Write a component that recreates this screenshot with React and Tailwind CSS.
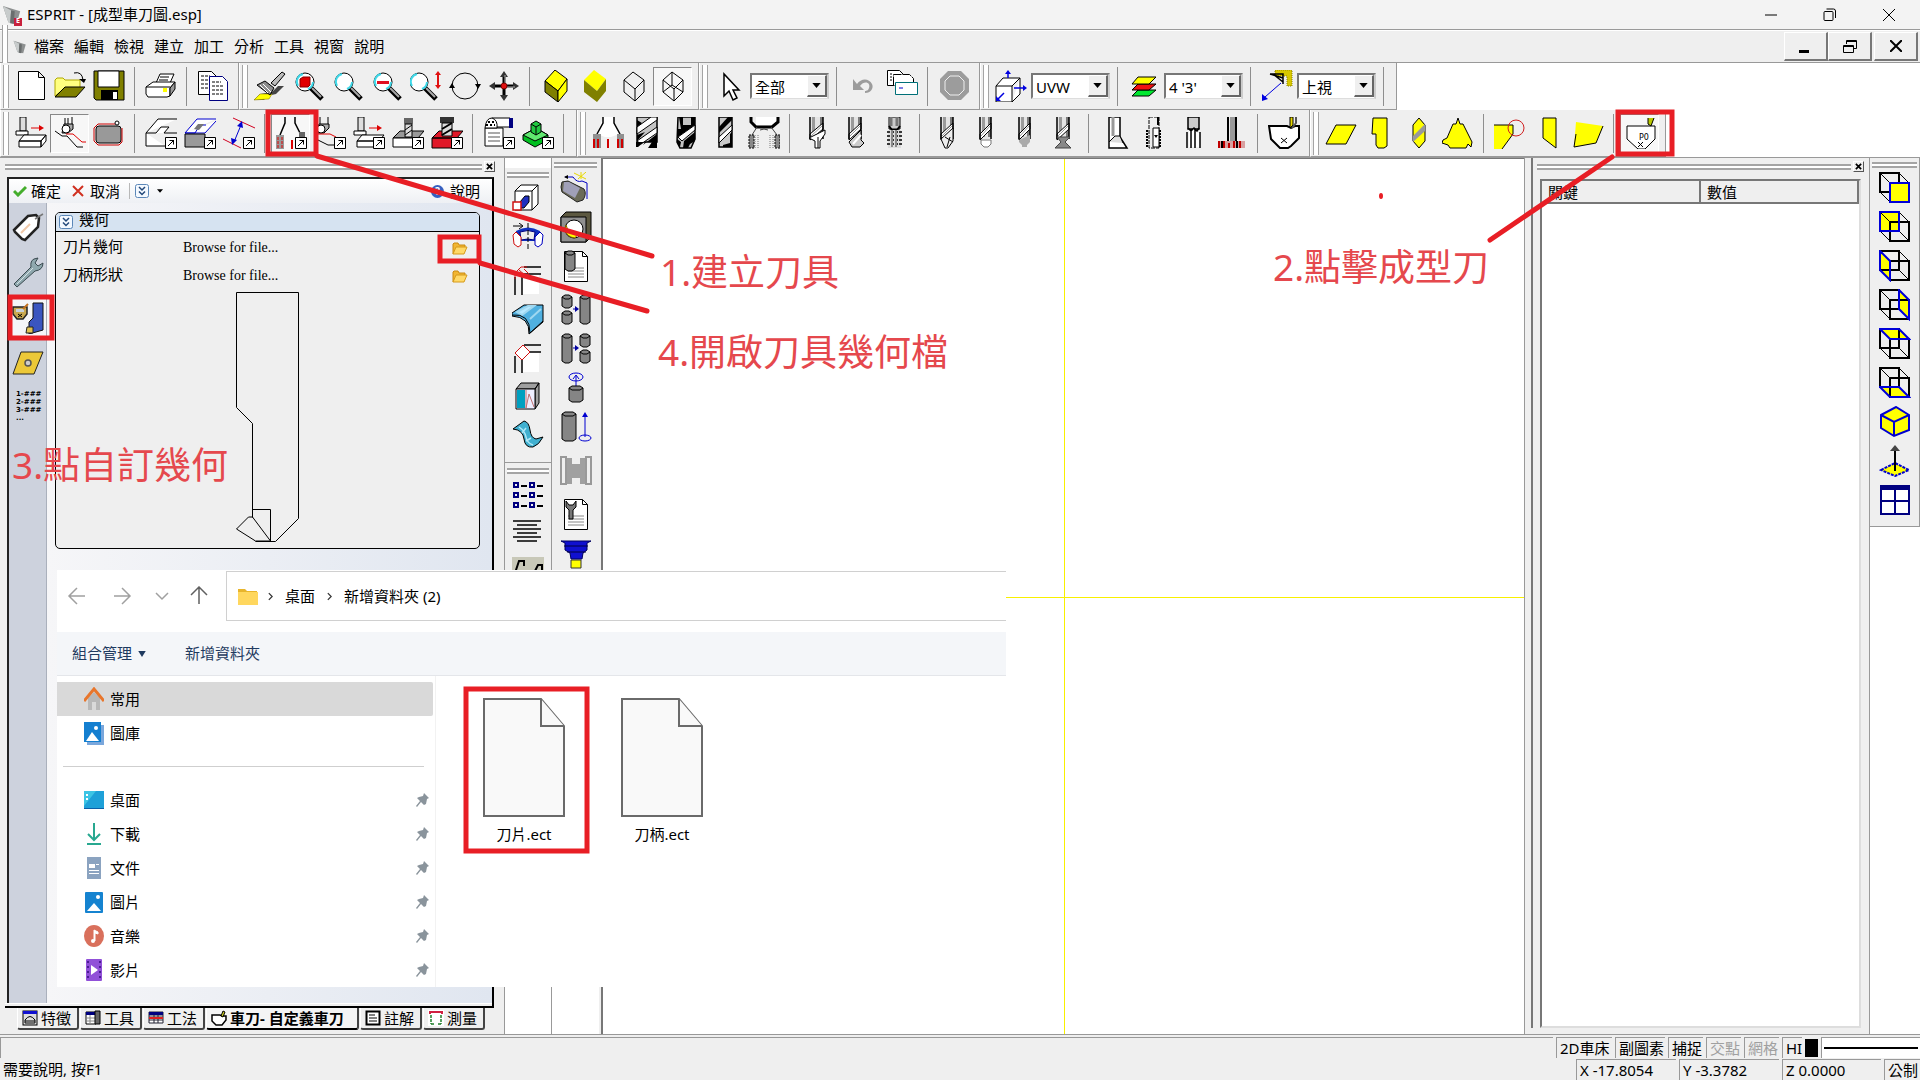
import { useState } from 'react';
import clsx from 'clsx';

const Badge = () => (
  <>
    <path d="M20.5 20.5h11v11h-11z" fill="#fff" stroke="#000" />
    <path d="M23 29l6-6M24.500 23.500h4v4" fill="none" stroke="#000" />
  </>
);

const Lens = ({ children }) => (
  <>
    <path d="M18 18l11 11" stroke="#000" strokeWidth="5" />
    <path d="M19 18l9 9" stroke="#a8a8a8" strokeWidth="2" />
    <circle cx="12" cy="12" r="9" fill="#fff" stroke="#000" />
    <path d="M5 16a8 8 0 0 1 5-12M15 19a8 8 0 0 0 5-7" fill="none" stroke="#3fd8e8" strokeWidth="2" />
    {children}
  </>
);

// shaded round shank with helical flutes, ends with the given tip
const Drill = ({ x = 9, w = 14, children }) => (
  <>
    <rect x={x} y="0" width={w} height="22" fill="#e4e4e4" />
    <rect x={x + 2} y="0" width="3" height="20" fill="#9a9a9a" />
    <rect x={x + w - 3} y="0" width="3" height="20" fill="#7a7a7a" />
    <path d={`M${x} 17l${w} -11v6l-${w} 11z`} fill="#fff" stroke="#000" />
    <path d={`M${x + 1} 19l${w - 2} -10`} stroke="#999" />
    <path d={`M${x} 0v22M${x + w} 0v22`} stroke="#000" strokeWidth="1.500" />
    {children}
  </>
);

const Cylinder = ({ x, y, w, h }) => (
  <>
    <path d={`M${x} ${y + 2}l3 -2h${w - 6}l3 2v${h - 4}l-3 2h-${w - 6}l-3 -2z`} fill="#858585" stroke="#000" />
    <path d={`M${x} ${y + 2}l3 2h${w - 6}l3 -2`} fill="none" stroke="#000" />
  </>
);

const faces = {
  front: '11,11 30,11 30,30 11,30',
  back: '1,1 20,1 20,20 1,20',
  left: '1,1 11,11 11,30 1,20',
  right: '20,1 30,11 30,30 20,20',
  top: '1,1 20,1 30,11 11,11',
  bottom: '1,20 20,20 30,30 11,30',
};

const ViewCube = ({ face }) => (
  <g strokeWidth="2" fill="none">
    {face !== 'front' && <polygon points={faces[face]} fill="#ff0" />}
    <path d="M1 1h19v19H1zM11 11h19v19H11z" stroke="#000" />
    <path d="M1 1l10 10M20 1l10 10M20 20l10 10M1 20l10 10" stroke="#000" strokeWidth="1" />
    <polygon points={faces[face]} stroke="#0000d8" fill={face === 'front' ? '#ff0' : 'none'} />
  </g>
);

const Sheet = () => (
  <>
    <path d="M4.500 1.500h18l5 5v25h-23z" fill="#fff" stroke="#000" />
    <path d="M22.500 1.500v5h5" fill="none" stroke="#000" />
    <path d="M8 18h16M8 21h16M8 24h16M8 27h16" stroke="#888" />
  </>
);

const icons = {
  newFile: <path d="M3.500 1.500h20l6 6v22h-26zM23.500 1.500v6h6" fill="#fff" stroke="#000" />,
  open: (
    <>
      <path d="M1 26V10l2-2h6l2 2h15v8H11z" fill="#ffff80" stroke="#b0a800" />
      <path d="M1 27l10-10h20L22 27z" fill="#808000" stroke="#000" />
      <path d="M20 3q8-2 9 7" fill="none" stroke="#000" />
      <path d="M25 9h7l-2 4z" />
    </>
  ),
  save: (
    <>
      <path d="M1 1h30v29H3l-2-2z" fill="#808000" stroke="#000" />
      <path d="M5 1h21v16H5z" fill="#fff" stroke="#000" />
      <path d="M8 20h17v10H8z" />
      <path d="M20 22h4v7h-4z" fill="#fff" />
    </>
  ),
  print: (
    <>
      <path d="M11 13l4-9h14l-4 9z" fill="#fff" stroke="#000" />
      <path d="M15 7h9M14 10h9" stroke="#000" />
      <path d="M1 17l7-5h22l-5 6v8l-3 1H3l-2-3z" fill="#fff" stroke="#000" />
      <path d="M25 18l5-6v7l-5 7z" fill="#999" stroke="#000" />
      <path d="M1 17h24" stroke="#000" />
      <path d="M18 18h4v4h-4z" fill="#ff0" />
    </>
  ),
  copy: (
    <>
      <path d="M1.500 1.500h13l5 5v18h-18z" fill="#fff" stroke="#000" />
      <path d="M4 6h9M4 10h12M4 14h12M4 18h12" stroke="#000" strokeDasharray="3 1" />
      <path d="M12.500 6.500h13l5 5v19h-18z" fill="#fff" stroke="#000080" />
      <path d="M15 12h9M15 16h12M15 20h12M15 24h12" stroke="#000" strokeDasharray="3 1" />
    </>
  ),
  brush: (
    <>
      <path d="M0 30l6-6 12-2 6-6h6l-8 8-9 2-3 4z" fill="#444" />
      <path d="M0 30l6-6h12l-3 5z" fill="#ff0" stroke="#807000" strokeWidth="0.500" />
      <path d="M3 15l8-4 9 7-4 7z" fill="#8c8c8c" stroke="#000" />
      <path d="M6 15l8 8M9 14l8 8" stroke="#fff" />
      <path d="M17 13L28 2l3 2-10 12z" fill="#bbb" stroke="#000" />
    </>
  ),
  zoomBox: <Lens><path d="M7 9l3-2h7v8l-2 2H7z" fill="#e00000" stroke="#800" /></Lens>,
  zoomPrev: <Lens />,
  zoomOut: <Lens><path d="M6 11h12v3H6z" fill="#e01020" /></Lens>,
  zoomDyn: (
    <>
      <g transform="translate(-3 0)"><Lens /></g>
      <path d="M28 3v14" stroke="#e01010" strokeWidth="2" />
      <path d="M25 5l3-4 3 4zM25 15l3 4 3-4z" fill="#e01010" />
    </>
  ),
  rotate: (
    <>
      <circle cx="16" cy="16" r="13" fill="none" stroke="#000" />
      <path d="M0 18h6l-3-5zM26 14h6l-3 5z" />
    </>
  ),
  pan: (
    <>
      <path d="M16 4v24M4 16h24" stroke="#000" strokeWidth="3" />
      <path d="M12 7l4-6 4 6zM12 25l4 6 4-6zM7 12l-6 4 6 4zM25 12l6 4-6 4z" fill="#333" />
      <path d="M17 5v8M19 17h8" stroke="#aaa" />
      <circle cx="16" cy="16" r="3" fill="#e01010" stroke="#800000" />
    </>
  ),
  cubeYellow: (
    <>
      <path d="M5 11l10-11 12 9-9 12z" fill="#ff0" stroke="#000" />
      <path d="M5 11l13 10v11L5 22z" fill="#808000" stroke="#000" />
      <path d="M18 21l9-12v12L18 32z" fill="#ff0" stroke="#000" />
    </>
  ),
  cubeShade: (
    <>
      <path d="M5 10l10-10 12 9-9 12z" fill="#ff0" />
      <path d="M5 10l13 11 9-12v12L18 32 5 22z" fill="#808000" />
    </>
  ),
  cubeLine: <path d="M6 10l9-8 11 8v12l-9 9-11-9zM6 10l11 9 9-9M17 19v12" fill="none" stroke="#000" />,
  cubeWire: <path d="M6 10l9-8 11 8v12l-9 9-11-9zM15 2v13L6 22M15 15l11 7M6 10l11 9 9-9M17 19v12" fill="none" stroke="#000" />,
  cursor: <path d="M10 4v22l5-5 4 9 4-2-4-8h6z" fill="#fff" stroke="#000" strokeWidth="1.500" />,
  undo: <path d="M6 9v11h11l-4-4c4-6 11-4 9 2-1 3-3 3-4 3v2c6 0 9-5 7-9-3-6-11-6-15 0z" fill="#9c9c9c" />,
  pages: (
    <>
      <path d="M1.500 0.500h12l4 4v11h-16z" fill="#fff" stroke="#000" />
      <path d="M4 4h2M4 7h2M4 10h2" stroke="#000" />
      <path d="M7.500 15.500v-11h16l4 4v8z" fill="#fff" stroke="#000" strokeDasharray="9 1" />
      <path d="M9.500 12.500h22v12h-22z" fill="#fff" stroke="#007078" />
      <path d="M13 18h4" stroke="#00c" />
    </>
  ),
  stop: (
    <>
      <path d="M10 1h13l8 8v13l-8 8H10l-8-8V9z" fill="#9c9c9c" />
      <path d="M12 6h9l5 5v9l-5 5h-9l-5-5v-9z" fill="none" stroke="#eee" />
    </>
  ),
  uvw: (
    <>
      <path d="M1 16h16v16H1zM1 16l7-8h17l-8 8M17 32l8-8V8" fill="#fff" stroke="#000" />
      <path d="M13 8V2M19 18h11M9 23l-7 7" stroke="#0000e0" strokeWidth="1.500" />
      <path d="M10 4h6l-3-4zM28 15v6l4-3zM1 26v5h5z" fill="#0000e0" />
    </>
  ),
  layers: (
    <>
      <path d="M4 26l6-6h18l-7 6z" fill="#00e830" stroke="#000" />
      <path d="M4 20l6-6h18l-7 6z" fill="#f01010" stroke="#000" />
      <path d="M4 14l6-7h18l-7 7z" fill="#ff0" stroke="#000" />
    </>
  ),
  viewDir: (
    <>
      <path d="M14 0h17v16h-5V6H14z" fill="#d8c800" stroke="#8a7f00" strokeDasharray="1 1" />
      <path d="M9 4h13v10M9 4l13 4M12 4l10 8" stroke="#000" fill="none" strokeWidth="1.500" />
      <path d="M20 13L4 27" stroke="#0000e0" />
      <path d="M1 31v-7l6 5z" fill="#0000e0" />
    </>
  ),

  machMill: (
    <>
      <path d="M5 0h6v14H5z" fill="#ddd" stroke="#000" />
      <path d="M1 14h12v4H1z" fill="#fff" stroke="#000" />
      <path d="M4 24l5-6h22l-5 6zM4 24h22v6H4zM26 24l5-6v6l-5 6z" fill="#fff" stroke="#000" />
      <path d="M16 11h9" stroke="#d00" />
      <path d="M24 8l5 3-5 3z" fill="#d00" />
    </>
  ),
  turning: (
    <>
      <path d="M11 1v8M18 0v9M14 1v6" stroke="#000" />
      <path d="M10 7h9v5l-5 4H8z" fill="#aaa" stroke="#000" />
      <circle cx="12" cy="12" r="4" fill="#fff" stroke="#000" />
      <path d="M1 14l7 5h5l10 11h6" fill="none" stroke="#000" />
      <path d="M12 17h7l9 8h4" fill="none" stroke="#d00" />
    </>
  ),
  pocket: (
    <>
      <rect x="3" y="9" width="25" height="17" rx="3" fill="#999" stroke="#000" />
      <path d="M22 7H5L1 11v13l4 4h21l3-3V11" fill="none" stroke="#c00" />
      <circle cx="24" cy="6" r="2" fill="#fff" stroke="#000" />
    </>
  ),
  stepWhite: (
    <>
      <path d="M1 16L13 2h19M1 16h10l5-6h8l-5 6h13M1 16v13h19" fill="#fff" stroke="#000" />
      <Badge />
    </>
  ),
  stepBlue: (
    <>
      <path d="M1 16L13 2h19M1 16h10l5-8h6M1 16h20L32 4" fill="#fff" stroke="#0000d0" />
      <path d="M10 12l4-5h6l-5 6z" fill="#777" />
      <path d="M1 17h20v13H1z" fill="#999" stroke="#000" />
      <Badge />
    </>
  ),
  measureIcon: (
    <>
      <path d="M10 1l22 10M0 22l18 9" stroke="#d00020" />
      <path d="M18 8l-7 17" stroke="#0000d0" />
      <path d="M19 4l-5 5 6 2zM9 28l-1-7 6 2z" fill="#0000d0" />
      <Badge />
    </>
  ),
  holder: (
    <>
      <path d="M10 0v6L5 18M20 0v6l6 12" fill="none" stroke="#000" strokeWidth="1.500" />
      <path d="M1 18h8v14H1z" fill="#999" />
      <path d="M3 20v12M7 20v12" stroke="#d00" strokeDasharray="3 1" />
      <path d="M17 23v9" stroke="#d00" strokeWidth="2" />
      <path d="M24 15h6v6h-6z" fill="#666" />
      <Badge />
    </>
  ),
  turnNew: (
    <>
      <path d="M6 0v8M14 0v8" stroke="#000" />
      <path d="M5 7h10v4l-5 5H2z" fill="#aaa" stroke="#000" />
      <circle cx="7" cy="12" r="4" fill="#fff" stroke="#000" />
      <path d="M2 17h14l6 3" fill="none" stroke="#d00" />
      <path d="M2 22l12 6h8" fill="none" stroke="#000" />
      <Badge />
    </>
  ),
  millNew: (
    <>
      <path d="M5 0h6v14H5z" fill="#ddd" stroke="#000" />
      <path d="M1 14h12v4H1z" fill="#fff" stroke="#000" />
      <path d="M4 24l5-6h22l-5 6zM4 24h22v6H4z" fill="#fff" stroke="#000" />
      <path d="M16 11h9" stroke="#d00" />
      <path d="M24 8l5 3-5 3z" fill="#d00" />
      <Badge />
    </>
  ),
  pocketNew: (
    <>
      <path d="M1 21l7-7h24l-6 7z" fill="#999" stroke="#000" />
      <path d="M1 21h22v9H1z" fill="#fff" stroke="#000" />
      <path d="M12 1h9v6h-9z" fill="#666" />
      <path d="M13 7h7v13h-7z" fill="#ddd" stroke="#000" />
      <path d="M13 13l7-5M13 18l7-5" stroke="#000" />
      <Badge />
    </>
  ),
  redNew: (
    <>
      <path d="M1 21l7-7h24l-6 7zM1 21h22v10H1z" fill="#e01828" stroke="#000" />
      <path d="M9 0h14v6H9z" fill="#333" />
      <path d="M11 6h10v13H11z" fill="#ddd" stroke="#000" />
      <path d="M11 12l10-6M11 18l10-6" stroke="#000" strokeWidth="2" />
      <Badge />
    </>
  ),
  sheetNew: (
    <>
      <path d="M9 1h18v9H9z" fill="#fff" stroke="#000" />
      <path d="M26 1h4v10h-4z" fill="#000080" />
      <path d="M2 11h18v18H2z" fill="#fff" stroke="#000" />
      <path d="M2 11q1-10 7-10 6 2 5 10z" fill="#fff" stroke="#000" />
      <path d="M5 5h8M3 8h9" stroke="#000" strokeWidth="2" strokeDasharray="2 2" />
      <path d="M5 16h12M5 20h12M5 24h12" stroke="#aaa" strokeWidth="2" />
      <Badge />
    </>
  ),
  greenNew: (
    <>
      <path d="M1 18l13-7 12 7v5L13 30 1 23z" fill="#00c020" stroke="#000" />
      <path d="M1 18l13-7 12 7-13 6z" fill="#60e870" stroke="#000" />
      <path d="M9 7l5-3 5 3v8l-5 3-5-3z" fill="#20c840" stroke="#000" />
      <path d="M9 7l5 3 5-3M14 10v8" fill="none" stroke="#000" />
      <Badge />
    </>
  ),

  collet: (
    <>
      <path d="M11 0h10l6 17-8 3h-6l-8-3z" fill="#fff" />
      <path d="M11 0v6L5 17M22 0v6l6 11" fill="none" stroke="#000" strokeWidth="1.500" />
      <path d="M1 17h8v14H1zM25 17h7v14h-7z" fill="#909090" />
      <path d="M2 22v9M6 22v9M26 22v9M30 22v9M16 22v9" stroke="#d00000" strokeWidth="2" />
    </>
  ),
  endMill: (
    <>
      <path d="M6 0h20v25H6z" fill="#c4c4c4" stroke="#000" strokeWidth="1.500" />
      <path d="M6 10L20 0h6v3L6 17zM6 24L26 10v6L10 27z" fill="#fff" stroke="#000" />
      <path d="M6 10V3l5 3zM6 24v-6l8-3zM12 28l14-11v8H14z" />
      <path d="M5 25h8l-6 5H5zM17 31l4-6h5v6z" />
    </>
  ),
  bullMill: (
    <>
      <path d="M8 0h17v22l-4 9H10l-3-6z" fill="#c4c4c4" stroke="#000" strokeWidth="1.500" />
      <path d="M9 0h4v8h8V0h4v8L8 20V12h3z" />
      <path d="M8 20L25 8v5L12 24z" fill="#fff" stroke="#000" />
      <path d="M13 31l1-7 11-9v9l-5 3-2 4zM7 22l4 3-1 5-3-4z" />
    </>
  ),
  ballMill: (
    <>
      <path d="M10 0h13v30H10z" fill="#c8c8c8" stroke="#000" strokeWidth="1.500" />
      <path d="M10 10L19 0h4v3L10 16z" />
      <path d="M10 20L23 8v5L10 26z" fill="#fff" stroke="#000" />
      <path d="M14 30h9V15l-2 2v9l-7 2z" />
    </>
  ),
  faceMill: (
    <>
      <path d="M8 0h20v8H8z" fill="#fff" />
      <path d="M3 0v5l5 5h16l6-5V0" fill="none" stroke="#000" strokeWidth="3" />
      <path d="M9 10L4 18M23 10l6 8M12 13q4-2 8 0" stroke="#444" fill="none" />
      <path d="M1 18h5v13H1zM27 18h5v13h-5z" fill="#888" stroke="#000" strokeDasharray="2 1" />
      <path d="M7 18v13M10 18v13M22 18v13M25 18v13" stroke="#777" strokeDasharray="1 1" />
    </>
  ),
  chamfer: (
    <Drill x={10} w={13}>
      <path d="M9 21l6 3v7h5v-7l5-7v-4L9 21z" fill="#fff" stroke="#000" />
      <path d="M18 20v11" stroke="#000" />
    </Drill>
  ),
  drill: (
    <Drill x={10} w={12}>
      <path d="M10 25l12-12v10l3 3-4 4h-8z" fill="#ccc" stroke="#000" />
      <path d="M14 27l8-9" stroke="#fff" strokeWidth="2" />
    </Drill>
  ),
  tap: (
    <>
      <path d="M11 0h11v12H11z" fill="#ccc" stroke="#000" />
      <path d="M13 0v9M19 0v9" stroke="#777" strokeWidth="3" />
      <path d="M11 9l3 4h5l3-4" fill="none" stroke="#000" strokeWidth="2" />
      <path d="M10 13h13v18H10z" fill="#ddd" />
      <path d="M9 15h15M9 19h15M9 23h15M9 27h15" stroke="#000" strokeWidth="1.500" strokeDasharray="3 1" />
      <path d="M14 13v17M18 13v17" stroke="#888" strokeWidth="2" />
    </>
  ),
  spot: (
    <Drill x={11} w={12}>
      <path d="M11 22l12-11v13l-5 7h-3z" fill="#eee" stroke="#000" />
      <path d="M15 20l8 5M17 30l3-10" stroke="#000" />
    </Drill>
  ),
  ballSmall: <Drill x={11} w={11}><path d="M12 23h10v4l-3 3h-4l-3-3z" fill="#fff" stroke="#777" /></Drill>,
  stepDrill: <Drill x={11} w={11}><path d="M11 23l11-5v7l-3 3v2h-5v-2l-3-3z" fill="#aaa" /></Drill>,
  countersink: <Drill x={10} w={12}><path d="M10 20h13l-5 5 6 6H8l6-6z" fill="#888" stroke="#444" /></Drill>,
  undercut: (
    <>
      <path d="M10 0h11v20l7 11H10z" fill="#fff" stroke="#000" strokeWidth="1.500" />
      <path d="M14 0v19" stroke="#999" strokeWidth="3" />
      <path d="M10 25l6-6h5l3 7" fill="#ddd" stroke="#000" />
    </>
  ),
  threadMill: (
    <>
      <path d="M11 0h10v31H11z" fill="#eee" stroke="#000" strokeDasharray="4 1" />
      <path d="M9 13v17M22 13v17" stroke="#000" strokeWidth="2" strokeDasharray="2 1" />
      <path d="M15 11h6v19h-6z" fill="#fff" stroke="#000" />
      <path d="M16 18h4l-2 3z" />
      <path d="M20 0v8" stroke="#000" strokeWidth="2" />
    </>
  ),
  reamer: (
    <>
      <path d="M11 0h11v12H11z" fill="#ccc" stroke="#000" strokeWidth="1.500" />
      <path d="M13 14v16M16 12v18M20 14v16M22 16v14" stroke="#fff" strokeWidth="2" />
      <path d="M10 15v16M14 12v19M18 12v19M23 15v16M11 11l3 3 3-3 3 3 2-3" stroke="#000" strokeWidth="1.500" fill="none" />
    </>
  ),
  slotMill: (
    <>
      <path d="M12 0v24M20 0v24" stroke="#000" strokeWidth="2" />
      <path d="M14 0h5v24h-5z" fill="#999" />
      <path d="M2 24h27v7H2z" fill="#d8a0a0" />
      <path d="M3 24v7M8 24v7M13 26v5M18 24v7M24 24v7" stroke="#c00000" strokeWidth="2" />
      <path d="M6 24v7M21 24v7" stroke="#000" strokeWidth="2" />
    </>
  ),
  customMill: (
    <>
      <path d="M1 9h18l4 2 4-2h4v12l-8 8-3 2h-8l-9-9z" fill="#fff" stroke="#000" strokeWidth="2" />
      <path d="M13 21l6 5M19 21l-6 5" stroke="#000" />
      <path d="M22 0h3v8l-3 3z" fill="#e8d800" stroke="#000" />
      <path d="M28 0v6l-4 5" fill="none" stroke="#555" strokeWidth="2" />
    </>
  ),
  rhomb: <path d="M1 27L11 8h20L21 27z" fill="#ff0" stroke="#000" />,
  groove: <path d="M9 1h14v28l-3 2h-6l-2-3V17H8z" fill="#ff0" stroke="#000" />,
  insertDia: (
    <>
      <path d="M10 8l6-7 6 7v16l-6 7-6-7z" fill="#ff0" stroke="#000" />
      <path d="M10 19l12-12v7L10 25z" fill="#999" />
    </>
  ),
  insertTri: <path d="M16 1l2 6h3l9 18-1 5-3-3-2 4H8l-2-3-6-2 1-3 4-2 6-14h3z" fill="#ff0" stroke="#000" />,
  insertCirc: (
    <>
      <path d="M0 8h19v9L8 32H0z" fill="#ff0" />
      <path d="M0 8h19v9L8 32" fill="none" stroke="#000" />
      <circle cx="22" cy="11" r="8" fill="none" stroke="#d02020" />
    </>
  ),
  insertCut: <path d="M10 1h13v30L10 21z" fill="#ff0" stroke="#000" />,
  insertTop: (
    <>
      <path d="M4 5l27 4-7 17-22 4z" fill="#ff0" />
      <path d="M31 9l-7 17-22 4 2-13" fill="none" stroke="#000" />
    </>
  ),
  customTurn: (
    <>
      <path d="M3 9h28v13l-10 10h-7L3 22z" fill="#fff" stroke="#000" />
      <text x="15" y="23" fontSize="8" fontFamily="DejaVu Sans" fill="#000">P0</text>
      <path d="M14 25l5 5M19 25l-5 5" stroke="#000" />
      <path d="M24 1v6l3 2 3-8" fill="#b8c800" stroke="#000" />
    </>
  ),

  extrude: (
    <>
      <path d="M3 7l6-6h17v19l-6 6H3z" fill="#fff" stroke="#000" />
      <path d="M3 7h17v19M20 7l6-6" fill="none" stroke="#000" />
      <path d="M8 18l5-6h4v6l-5 6H8z" fill="#2030c0" stroke="#000" />
      <path d="M1 18h8v8H1z" fill="#fff" stroke="#d01010" strokeWidth="1.500" />
    </>
  ),
  revolve: (
    <>
      <path d="M4 8q12-7 24 0v12l-6-2H9l-5 2z" fill="#1030c0" />
      <path d="M8 9q8-3 15 0l-1 8q-6-2-13 0z" fill="#eee" stroke="#000080" />
      <path d="M1 12l3-3 5 5v8l-3 2-4-3z" fill="#fff" stroke="#d01010" />
      <path d="M31 12l-3-3-5 5v8l3 2 4-3z" fill="#fff" stroke="#0000c0" />
      <path d="M16 0v28" stroke="#000" strokeDasharray="5 2" />
      <path d="M1 3h9M7 0l4 3-4 3" stroke="#000" fill="none" />
    </>
  ),
  fillet: (
    <>
      <path d="M10 10h17v20H10z" fill="#fff" />
      <path d="M3 31V13M12 3h17M10 31V10h19" fill="none" stroke="#000" strokeWidth="1.500" />
      <path d="M3 15V9l6-6h6M6 5l10 9M12 5l5 5" fill="none" stroke="#d01010" />
    </>
  ),
  surfaceBend: (
    <>
      <path d="M0 10L12 2h19v17L17 31q1-17-17-18z" fill="#50b0e0" stroke="#000" />
      <path d="M5 9L16 3h6L10 12zM18 16L29 6" fill="#b8e8ff" stroke="#a0d8f0" strokeWidth="2" />
      <path d="M0 12q18-2 18 18L31 18" fill="none" stroke="#000" />
    </>
  ),
  chamferEdge: (
    <>
      <path d="M10 10h17v20H10z" fill="#fff" />
      <path d="M3 31V14M12 3h17M10 31V18M17 10h12" fill="none" stroke="#000" strokeWidth="1.500" />
      <path d="M3 11l8-8 7 7-8 8z" fill="#fff" stroke="#d01010" />
    </>
  ),
  bookSolid: (
    <>
      <path d="M4 8l5-6h18l-4 6zM23 8l4-6v20l-4 6z" fill="#a0a0a0" stroke="#000" />
      <path d="M4 8h19v20H4z" fill="#eef" stroke="#000" />
      <path d="M5 9h8v18H5z" fill="#00a0c0" />
      <path d="M14 9v18l3-14 5 13" fill="none" stroke="#c07070" />
    </>
  ),
  surfaceWave: (
    <>
      <path d="M1 9l11-8q5 1 6 9t6 9l7-2q-4 8-10 10-8 1-9-8T1 9z" fill="#40b0d0" stroke="#000" />
      <path d="M7 7q6 4 7 10t7 8M14 8l-4 5M19 18l-5 3" stroke="#b0e8f8" fill="none" strokeWidth="1.500" />
    </>
  ),
  patternList: (
    <>
      <path d="M2 4h4v4H2zM18 4h4v4h-4zM2 14h4v4H2zM18 14h4v4h-4zM2 24h4v4H2zM18 24h4v4h-4z" fill="none" stroke="#000080" strokeWidth="2" />
      <path d="M9 7h6M25 7h6M9 17h6M25 17h6M9 27h6M25 27h6" stroke="#000" strokeWidth="2" />
    </>
  ),
  textLines: <path d="M1 6h28M5 10h20M1 14h28M5 18h20M1 22h28M5 26h20" stroke="#000" strokeWidth="1.500" />,
  wireBox: (
    <>
      <path d="M0 6h32v22H0z" fill="#c8c8b8" />
      <path d="M3 22l4-12h5v5M22 22l4-8h4v8" fill="none" stroke="#000" strokeWidth="2" />
    </>
  ),

  barStock: (
    <>
      <path d="M2 10l6-1 16 8q3 5-1 11l-6 2L2 20q-2-5 0-10z" fill="#6a6a58" stroke="#222" />
      <path d="M4 10h5l11 6-5 10-12-7z" fill="#a0a0b8" />
      <path d="M5 5h8q4 6 9 4l5 2v16" fill="none" stroke="#0000c0" />
      <path d="M14 1l12 6M26 0l-8 7M21 0v7" stroke="#e8d800" />
      <path d="M4 5l4-2v4z" />
    </>
  ),
  boreBox: (
    <>
      <path d="M1 6l5-5h25v25l-5 5H1z" fill="#5c5840" stroke="#000" />
      <path d="M1 6h25v25H1z" fill="#909090" stroke="#000" />
      <circle cx="14" cy="18" r="9" fill="#fff" stroke="#000" />
      <path d="M6 14q2 9 12 9l-3 4q-9-1-10-9z" fill="#ff0" stroke="#806000" />
    </>
  ),
  stockSheet: <><Sheet /><Cylinder x={5} y={1} w={10} h={20} /></>,
  joinCyl: (
    <>
      <Cylinder x={2} y={1} w={10} h={13} />
      <Cylinder x={2} y={17} w={10} h={13} />
      <Cylinder x={20} y={1} w={10} h={29} />
      <path d="M13 15h3" stroke="#0000a0" /><path d="M15 12l4 3-4 3z" fill="#0000a0" />
    </>
  ),
  splitCyl: (
    <>
      <Cylinder x={2} y={1} w={10} h={29} />
      <Cylinder x={20} y={1} w={10} h={13} />
      <Cylinder x={20} y={17} w={10} h={13} />
      <path d="M13 15h3" stroke="#0000a0" /><path d="M15 12l4 3-4 3z" fill="#0000a0" />
    </>
  ),
  rotateCyl: (
    <>
      <ellipse cx="16" cy="5" rx="7" ry="4" fill="none" stroke="#0000d0" />
      <path d="M16 16V4M13 7l3-4 3 4" fill="none" stroke="#0000d0" />
      <Cylinder x={9} y={14} w={14} h={16} />
    </>
  ),
  moveCyl: (
    <>
      <Cylinder x={2} y={1} w={14} h={29} />
      <path d="M25 26V4" stroke="#0000d0" /><path d="M22 6l3-5 3 5z" fill="#0000d0" />
      <ellipse cx="25" cy="27" rx="6" ry="3" fill="none" stroke="#0000d0" />
    </>
  ),
  spoolGrey: (
    <>
      <path d="M1 2h5v27H1zM26 2h5v27h-5z" fill="#eee" stroke="#999" strokeWidth="2" />
      <path d="M7 3h5v6h8V3h5v26h-5v-6h-8v6H7z" fill="#a0a0a0" />
    </>
  ),
  wrenchSheet: (
    <>
      <Sheet />
      <path d="M6 3v6l3 3v9h4v-9l3-3V3l-3 4H9z" fill="#777" stroke="#000" />
    </>
  ),
  spindleBlue: (
    <>
      <path d="M1 4h30l-4 2v7l-4 3-1 6H11l-1-6-5-3V6z" fill="#1010d0" stroke="#000060" />
      <path d="M4 9h24M7 15h19" stroke="#000040" />
      <path d="M11 23h10v8H11z" fill="#ff0" stroke="#333" />
    </>
  ),

  isoView: (
    <>
      <path d="M2 9L17 1l13 8v15l-15 6-13-8z" fill="#ff0" stroke="#0000d0" strokeWidth="2" />
      <path d="M2 9l13 7 15-7M15 16v14" fill="none" stroke="#0000d0" strokeWidth="2" />
    </>
  ),
  normalView: (
    <>
      <path d="M2 25l14-7 14 7-14 6z" fill="#ff0" stroke="#0000d0" strokeDasharray="3 1" strokeWidth="2" />
      <path d="M16 26V2" stroke="#000" strokeWidth="2" />
      <path d="M11 6l5-6 5 6z" fill="#444" />
    </>
  ),
  fourView: (
    <>
      <path d="M2 2h28v28H2zM16 5v25M2 17h28" fill="#fff" stroke="#000080" strokeWidth="2" />
      <path d="M1 1h30v5H1z" fill="#000080" />
    </>
  ),
};

['front', 'back', 'left', 'right', 'top', 'bottom'].forEach((f) => {
  icons[`view-${f}`] = <ViewCube face={f} />;
});

function Icon({ name, className = 'size-8' }) {
  return (
    <svg viewBox="0 0 32 32" className={clsx(className, 'shrink-0')} fill="#000" aria-hidden="true">
      {icons[name]}
    </svg>
  );
}

function ToolButton({ name, pressed }) {
  return (
    <button
      aria-label={name}
      className={clsx(
        'flex h-[39px] w-[39px] shrink-0 items-center justify-center',
        pressed && 'border border-t-[#888] border-l-[#888] border-r-white border-b-white bg-[#f7f7f7]'
      )}
    >
      <Icon name={name} />
    </button>
  );
}

const Sep = () => <div className="mx-[6px] h-[39px] w-px shrink-0 bg-[#8e8e8e]" />;

function Grip({ wide }) {
  return wide ? (
    <div className="h-[6px] w-full border-y-2 border-t-[#a4a4a4] border-b-[#a4a4a4] bg-white" />
  ) : (
    <div className="mr-[2px] ml-[2px] h-[43px] w-[6px] shrink-0 border-x border-[#a4a4a4] bg-white" />
  );
}

function Band({ children }) {
  return (
    <div className="flex h-[47px] shrink-0 items-center border-r border-b border-l border-r-[#999] border-b-[#999] border-l-white bg-[#efefef] pr-[6px]">
      <Grip />
      {children}
    </div>
  );
}

function Combo({ label, value }) {
  return (
    <div className="relative mr-px ml-px h-[26px] w-[79px] shrink-0 border-2 border-[#777] border-r-[#ccc] border-b-[#ddd] bg-white">
      <select aria-label={label} defaultValue={value} className="h-full w-full appearance-none bg-white pl-[3px] text-[15px] leading-[20px] outline-none">
        <option>{value}</option>
      </select>
      <div className="pointer-events-none absolute inset-y-0 right-0 flex w-[20px] items-center justify-center border border-r-2 border-b-2 border-white border-r-[#666] border-b-[#666] bg-[#efefef]">
        <svg viewBox="0 0 10 6" className="h-[5px] w-[9px]"><path d="M0 0h10L5 6z" /></svg>
      </div>
    </div>
  );
}

// "|" puts a separator, "*" marks the pressed button
function Tools({ list }) {
  return list.split(' ').map((n, i) =>
    n === '|' ? <Sep key={i} /> : <ToolButton key={i} name={n.replace('*', '')} pressed={n.endsWith('*')} />
  );
}

const Cone = ({ className }) => (
  <svg viewBox="0 0 22 22" className={className} aria-hidden="true">
    <path d="M1 1l19 6-4 14-9-2z" fill="#8d9090" />
    <path d="M1 1l9 5-1 14-2-1z" fill="#c8cccc" />
    <path d="M10 6l4 1-1 14-4-1z" fill="#6a6e6e" />
  </svg>
);

function TitleBar() {
  return (
    <header className="flex h-[30px] shrink-0 items-center border-b border-[#999] bg-[#f3f3f3] pl-[2px]">
      <div className="relative">
        <Cone className="size-[20px]" />
        <span className="absolute right-0 -bottom-px flex h-[8px] w-[8px] items-center justify-center bg-[#c8203c] text-[7px] font-bold text-white">E</span>
      </div>
      <h1 className="ml-[5px] text-[15px]">ESPRIT - [成型車刀圖.esp]</h1>
      <div className="ml-auto flex items-center">
        <button aria-label="最小化" className="flex w-[58px] justify-center">
          <svg viewBox="0 0 12 12" className="size-3"><path d="M0 6h12" stroke="#000" /></svg>
        </button>
        <button aria-label="還原" className="flex w-[58px] justify-center">
          <svg viewBox="0 0 13 13" className="size-[13px]" fill="none" stroke="#000">
            <rect x="1" y="3.500" width="9" height="9" rx="1" /><path d="M3.500 1h7a2 2 0 0 1 2 2v7" />
          </svg>
        </button>
        <button aria-label="關閉" className="flex w-[62px] justify-center">
          <svg viewBox="0 0 12 12" className="size-3"><path d="M0 0l12 12M12 0L0 12" stroke="#000" /></svg>
        </button>
      </div>
    </header>
  );
}

const mdiBtn = 'flex h-[29px] w-[44px] items-center justify-center border border-white border-r-2 border-b-2 border-r-[#777] border-b-[#777]';

function MenuBar() {
  return (
    <nav className="flex h-[33px] shrink-0 items-center border-t border-b border-t-white border-b-[#999]">
      <Grip />
      <Cone className="ml-[3px] size-[14px]" />
      <div className="ml-[7px] flex gap-[10px] text-[15px]">
        {['檔案', '編輯', '檢視', '建立', '加工', '分析', '工具', '視窗', '說明'].map((m) => (
          <button key={m}>{m}</button>
        ))}
      </div>
      <div className="ml-auto flex pr-[2px]">
        <button aria-label="最小化文件" className={mdiBtn}><span className="mt-[11px] mr-[4px] h-[3px] w-[10px] bg-black" /></button>
        <button aria-label="還原文件" className={mdiBtn}>
          <svg viewBox="0 0 16 15" className="h-[15px] w-[16px]" fill="none" stroke="#000">
            <path d="M4.500 5V1.500h10v8H11M4 2.500h11" /><path d="M1.500 6.500h10v7h-10zM1 7.500h11" />
          </svg>
        </button>
        <button aria-label="關閉文件" className={clsx(mdiBtn, 'ml-[2px]')}>
          <svg viewBox="0 0 12 12" className="size-3"><path d="M0 0l12 12M12 0L0 12" stroke="#000" strokeWidth="2" /></svg>
        </button>
      </div>
    </nav>
  );
}

function Toolbars() {
  return (
    <div className="shrink-0 bg-white">
      <div className="flex">
        <Band><Tools list="newFile open save | print | copy" /></Band>
        <Band><Tools list="brush zoomBox zoomPrev zoomOut zoomDyn rotate pan | cubeYellow cubeShade cubeLine cubeWire*" /></Band>
        <Band>
          <Tools list="cursor" /><Combo label="選取" value="全部" />
          <Tools list="| undo pages | stop" />
        </Band>
        <Band>
          <Tools list="uvw" /><Combo label="座標" value="UVW" /><Sep />
          <Tools list="layers" /><Combo label="圖層" value="4 '3'" /><Sep />
          <Tools list="viewDir" /><Combo label="視圖" value="上視" /><Sep />
        </Band>
      </div>
      <div className="flex">
        <Band>
          <Tools list="machMill turning* pocket | stepWhite stepBlue measureIcon | holder* turnNew millNew pocketNew redNew | sheetNew greenNew |" />
        </Band>
        <Band>
          <Tools list="collet endMill bullMill ballMill faceMill | chamfer drill tap | spot ballSmall stepDrill countersink | undercut threadMill reamer slotMill | customMill" />
        </Band>
        <Band>
          <Tools list="rhomb groove insertDia insertTri | insertCirc insertCut insertTop | customTurn*" />
        </Band>
      </div>
    </div>
  );
}

const CloseX = () => (
  <button aria-label="關閉面板" className="flex size-[11px] shrink-0 items-center justify-center border border-white border-r-[#555] border-b-[#555] bg-[#efefef]">
    <svg viewBox="0 0 8 8" className="size-[7px]"><path d="M1 1l6 6M7 1L1 7" stroke="#000" strokeWidth="2" /></svg>
  </button>
);

const Chevrons = () => (
  <svg viewBox="0 0 14 14" className="size-[14px]" fill="none" aria-hidden="true">
    <rect x="0.500" y="0.500" width="13" height="13" rx="2" fill="#f4f9ff" stroke="#5b87b8" />
    <path d="M4 3l3 3 3-3M4 7.500l3 3 3-3" stroke="#22487a" strokeWidth="1.500" />
  </svg>
);

const FolderOpen = () => (
  <svg viewBox="0 0 16 13" className="h-[13px] w-[16px]" aria-hidden="true">
    <path d="M1 12V2l1-1h4l1 2h6v3" fill="#f2b632" stroke="#c98a10" />
    <path d="M1 12l3-7h11l-3 7z" fill="#ffd968" stroke="#d69a1a" />
  </svg>
);

const sideTabs = [
  <svg viewBox="0 0 32 32" className="size-8">
    <path d="M2 18L16 4l8-1 3 3-1 9-13 13-3-1-7-7z" fill="#fff" stroke="#222" strokeWidth="2.500" />
    <path d="M9 21l9-9" stroke="#f0c8a8" strokeWidth="2" />
    <path d="M23 7l8-5" stroke="#777" strokeWidth="1.500" />
  </svg>,
  <svg viewBox="0 0 32 32" className="size-8">
    <path d="M2 27l17-17q-1-6 3-8l4-1-3 5 3 3 5-3q0 7-8 8L5 30z" fill="#8fa8ae" stroke="#3a4a50" />
    <path d="M5 27l16-16" stroke="#d5e2e5" />
  </svg>,
  <svg viewBox="0 0 32 32" className="size-8">
    <path d="M21 1h10v27l-14 4V20l4-4z" fill="#3a55c0" stroke="#111" />
    <path d="M1 5h14v7l-4 5H5l-4-5z" fill="#c8a850" stroke="#222" strokeWidth="1.500" />
    <path d="M4 7h8v3H4z" fill="#c8d0d8" />
    <path d="M11 7l5-5" stroke="#c07020" strokeWidth="2" />
    <path d="M6 12l4 3M10 12l-4 3" stroke="#000" />
    <path d="M15 25h6v6h-7z" fill="#e0c050" stroke="#222" />
  </svg>,
  <svg viewBox="0 0 32 32" className="size-8">
    <path d="M9 5h22l-9 22H1z" fill="#ecc838" stroke="#222" />
    <circle cx="16" cy="16" r="3" fill="#ccc" stroke="#555" strokeWidth="1.500" />
  </svg>,
];

function TaskPanel() {
  const [tab, setTab] = useState(2);
  return (
    <section className="mr-[10px] ml-[7px] flex min-h-0 flex-1 flex-col border-t-2 border-r-2 border-l-2 border-t-[#222] border-r-black border-l-[#222]">
      <div className="flex h-[24px] shrink-0 items-center bg-linear-to-b from-white to-[#eef0f4] pr-[12px] pl-[4px] text-[15px] leading-[22px]">
        <svg viewBox="0 0 14 12" className="h-3 w-[14px]"><path d="M1 6l4 4 8-8" fill="none" stroke="#44ad2c" strokeWidth="3" /></svg>
        <button className="ml-[4px]">確定</button>
        <svg viewBox="0 0 12 12" className="ml-[11px] size-[12px]"><path d="M1 1l10 10M11 1L1 11" stroke="#d03020" strokeWidth="2" /></svg>
        <button className="ml-[6px]">取消</button>
        <span className="mr-[5px] ml-[9px] h-4 w-px bg-[#b8b8b8]" />
        <Chevrons />
        <svg viewBox="0 0 10 6" className="ml-[8px] h-[4px] w-[6px]"><path d="M0 0h10L5 6z" /></svg>
        <span className="ml-auto flex size-[13px] items-center justify-center rounded-full bg-[#3560c0] text-[10px] leading-none font-bold text-white">?</span>
        <button className="ml-[6px]">說明</button>
      </div>
      <div className="flex min-h-0 flex-1">
        <div className="flex w-[38px] shrink-0 flex-col border-r border-[#aab0bc] bg-[#cdd2dd] pt-[2px]">
          {sideTabs.map((icon, i) => (
            <button
              key={i}
              aria-label={`分頁 ${i + 1}`}
              onClick={() => setTab(i)}
              className={clsx('flex h-[45px] items-center justify-center', tab === i && 'bg-[#f4f5f8]')}
            >
              {icon}
            </button>
          ))}
          <button className="pt-[5px] pl-[7px] text-left font-['DejaVu_Sans'] text-[7px] leading-[8px] font-bold">
            1-###<br />2-###<br />3-###<br />...
          </button>
        </div>
        <div className="min-w-0 flex-1 bg-linear-to-r from-[#f6f6f8] to-[#e0e6f0] pt-[9px] pr-[12px] pl-[8px]">
          <div className="rounded-[5px] border border-black bg-[#efefef]">
            <h2 className="flex h-[19px] items-center rounded-t-[4px] border-b border-black bg-[#d6e3f1] pl-[3px] text-[15px]">
              <Chevrons /><span className="mb-[6px] ml-[6px]">幾何</span>
            </h2>
            {['刀片幾何', '刀柄形狀'].map((label) => (
              <div key={label} className="flex h-[28px] items-center pr-[11px] pl-[7px] text-[15px]">
                <span className="w-[120px]">{label}</span>
                <span className="pt-[3px] font-['Liberation_Serif'] text-[14px]">Browse for file...</span>
                <button aria-label={`開啟${label}`} className="ml-auto pt-[4px]"><FolderOpen /></button>
              </div>
            ))}
            <svg viewBox="0 0 422 260" className="h-[260px] w-[422px]" fill="none" stroke="#000">
              <path d="M180.500 4.500h62v226l-23 23h-20M180.500 4.500v115l16 16v94" />
              <path d="M196.500 221.500h18v32M196.500 229l18 24h-15l-19-12 12-12h4" />
            </svg>
          </div>
        </div>
      </div>
      <div className="-ml-[4px] h-[5px] shrink-0 border-t border-b-2 border-t-white border-b-black bg-[#efefef]" />
    </section>
  );
}

const dockTabs = [
  ['特徵', <><rect x="1" y="1" width="14" height="14" fill="#ddd" stroke="#000" /><path d="M1 1h14v3H1z" fill="#1010d0" /><path d="M3 10q5-7 10 0v3H3zM3 11h10" fill="none" stroke="#000" /></>],
  ['工具', <><path d="M1 2h10v12H1z" fill="#fff" stroke="#000" /><path d="M1 2h10v3H1z" fill="#000080" /><path d="M2 8h8M2 11h8M5 5v9" stroke="#888" /><path d="M10 1h5v13h-5z" fill="#666" stroke="#000" /></>],
  ['工法', <><path d="M1 2h14v11H1zM1 6h14M1 10h14M6 2v11M10 2v11" fill="#fff" stroke="#223" /><path d="M1 2h14v3H1z" fill="#000080" /><path d="M1 8h14" stroke="#e02020" strokeWidth="2" /></>],
  ['車刀- 自定義車刀', <><path d="M1 5h8l2 1h4v4l-4 5H5l-4-4z" fill="#fff" stroke="#000" strokeWidth="1.500" /><path d="M10 6l2-5 2 1-2 5z" fill="#c8c820" stroke="#000" /></>],
  ['註解', <><path d="M1.500 1.500h13v13h-13z" fill="#fff" stroke="#000" strokeWidth="2" /><path d="M4 5h6M4 8h8M4 11h8" stroke="#000" /></>],
  ['測量', <><path d="M0 0h16v16H0z" fill="#fff" /><path d="M3 2h10M2 1v3M14 1v3" stroke="#d02040" strokeWidth="2" /><path d="M3 5v9M13 5v9M3 14h3M10 14h3" stroke="#20802c" strokeDasharray="3 1" strokeWidth="1.500" /></>],
];

function DockTabs() {
  return (
    <div className="flex h-[26px] shrink-0 pl-[17px]">
      {dockTabs.map(([label, icon], i) => (
        <button
          key={label}
          className={clsx(
            'mr-px flex h-[22px] items-center gap-[3px] rounded-b-[3px] border-r-2 border-b-2 border-l border-l-white border-r-[#444] border-b-[#444] pr-[6px] pl-[4px] text-[15px] leading-[18px] whitespace-nowrap',
            i === 3 && 'min-w-[153px] border-b-black bg-[#f4f4f4] font-bold'
          )}
        >
          <svg viewBox="0 0 16 16" className="size-4 shrink-0">{icon}</svg>
          {label}
        </button>
      ))}
    </div>
  );
}

function LeftDock() {
  return (
    <aside className="flex w-[504px] shrink-0 flex-col">
      <div className="mb-[2px] flex h-[17px] shrink-0 items-center gap-[2px] pr-[9px] pl-[5px]">
        <Grip wide />
        <CloseX />
      </div>
      <TaskPanel />
      <DockTabs />
    </aside>
  );
}

const VButton = ({ name, tight }) => (
  <button aria-label={name} className={clsx('flex items-center justify-center', tight ? 'h-[36px]' : 'h-[39px]')}>
    <Icon name={name} />
  </button>
);

function VerticalBars() {
  return (
    <>
      <div className="flex w-[48px] shrink-0 flex-col border-r border-l border-[#999]">
        <div className="h-[10px] bg-white" />
        <div className="px-[2px] pt-[4px]"><Grip wide /></div>
        <div className="flex flex-col border-b border-[#999] pt-[2px] pb-[7px]">
          {['extrude', 'revolve'].map((n) => <VButton key={n} name={n} />)}
          <div className="h-[2px]" />
          {['fillet', 'surfaceBend', 'chamferEdge', 'bookSolid', 'surfaceWave'].map((n) => <VButton key={n} name={n} />)}
        </div>
        <div className="px-[2px] pt-[5px]"><Grip wide /></div>
        <div className="flex flex-col pt-[3px]">
          {['patternList', 'textLines', 'wireBox'].map((n) => <VButton key={n} name={n} tight />)}
        </div>
        <div className="flex-1 bg-white" />
      </div>
      <div className="flex w-[51px] shrink-0 flex-col border-r-2 border-[#777] pr-[2px]">
        <div className="px-[2px] pt-[4px]"><Grip wide /></div>
        {['barStock', 'boreBox', 'stockSheet'].map((n) => <VButton key={n} name={n} />)}
        <div className="h-[5px]" />
        {['joinCyl', 'splitCyl', 'rotateCyl', 'moveCyl'].map((n) => <VButton key={n} name={n} />)}
        <div className="h-[5px]" />
        <VButton name="spoolGrey" />
        <div className="h-[4px]" />
        {['wrenchSheet', 'spindleBlue'].map((n) => <VButton key={n} name={n} />)}
        <div className="flex-1 bg-white" />
      </div>
    </>
  );
}

function Canvas() {
  return (
    <div className="relative min-w-0 flex-1 border-t border-[#777] bg-white">
      <div className="absolute inset-y-0 left-1/2 w-px bg-[#f8f000]" />
      <div className="absolute top-1/2 right-0 left-0 h-px bg-[#f8f000]" />
    </div>
  );
}

function PropertyPanel() {
  return (
    <aside className="flex w-[346px] shrink-0 flex-col border-r border-l border-[#999] pb-[6px]">
      <div className="ml-[6px] flex flex-1 flex-col border-l-2 border-[#777] pr-[5px] pl-[4px]">
        <div className="mb-[4px] flex h-[17px] items-center gap-[2px]">
          <Grip wide />
          <CloseX />
        </div>
        <div className="mr-[3px] ml-[3px] flex-1 border-2 border-t-[#777] border-r-[#ddd] border-b-[#ddd] border-l-[#777] bg-white">
          <table className="w-full table-fixed text-[15px] leading-[20px]">
            <thead>
              <tr className="bg-[#efefef] text-left">
                <th className="h-[22px] border-r-2 border-b-2 border-[#777] pl-[6px] font-normal">關鍵</th>
                <th className="h-[22px] border-r-2 border-b-2 border-[#777] pl-[6px] font-normal">數值</th>
              </tr>
            </thead>
          </table>
        </div>
      </div>
    </aside>
  );
}

function ViewBar() {
  return (
    <div className="w-[50px] shrink-0 bg-white">
      <div className="flex h-[369px] flex-col border-r border-b border-[#999] bg-[#efefef]">
        <div className="px-[2px] pt-[4px]"><Grip wide /></div>
        {['view-front', 'view-back', 'view-left', 'view-right', 'view-top', 'view-bottom', 'isoView', 'normalView', 'fourView'].map((n) => (
          <VButton key={n} name={n} />
        ))}
      </div>
    </div>
  );
}

const places = [
  ['桌面', <><path d="M0 3h20v18H0z" fill="#1ea0d8" /><path d="M0 3h12L0 18z" fill="#3cc4e4" /><path d="M2 6h2v2H2zM2 10h2v2H2z" fill="#fff" /><path d="M0 20h20v1H0z" fill="#0b5fa8" /></>],
  ['下載', <path d="M10 1v17M4 12l6 6 6-6M3 22h14" fill="none" stroke="#28a890" strokeWidth="2" />],
  ['文件', <><path d="M3 1h14v22H3z" fill="#8ba3c0" /><path d="M5 8h6v4H5zM12 8h3v1h-3zM5 14h10v1H5zM5 17h10v1H5z" fill="#fff" /></>],
  ['圖片', <><rect x="1" y="2" width="18" height="21" rx="1" fill="#1583d0" /><path d="M3 21l7-8 7 8z" fill="#fff" /><circle cx="14" cy="7" r="2" fill="#fff" /></>],
  ['音樂', <><ellipse cx="10" cy="12" rx="10" ry="11" fill="#d9705c" /><path d="M10 17V6l4 2v2l-3-1v8" fill="#fff" stroke="#fff" /><circle cx="9" cy="17" r="2" fill="#fff" /></>],
  ['影片', <><rect x="2" y="1" width="16" height="22" rx="1" fill="#9150d8" /><path d="M7 7v10l7-5z" fill="#fff" /><path d="M4 3v18M16 3v18" stroke="#4c1d95" strokeDasharray="2 3" strokeWidth="2" /></>],
];

const Pin = () => (
  <svg viewBox="0 0 14 16" className="mr-[3px] ml-auto h-[16px] w-[14px]" fill="#8a949c" aria-hidden="true">
    <path d="M8 1l5 5-2 1-1 5-2 1-3-3-4 5-1-1 4-5-3-3 2-1 4-1z" />
  </svg>
);

function PlaceRow({ label, icon, active, pinned }) {
  return (
    <button className={clsx('flex h-[34px] w-full items-center pl-[27px] text-left text-[15px]', active && 'rounded-r-[2px] bg-[#d9d9d9]')}>
      <svg viewBox="0 0 20 24" className="h-6 w-5 shrink-0">{icon}</svg>
      <span className="ml-[6px]">{label}</span>
      {pinned && <Pin />}
    </button>
  );
}

function FileItem({ name }) {
  return (
    <button className="flex w-[138px] flex-col items-center text-[15px]">
      <svg viewBox="0 0 82 119" className="h-[119px] w-[82px]" fill="#f9f9f9" stroke="#6a6a6a" strokeWidth="2">
        <path d="M1 1h57l23 27v90H1z" />
        <path d="M58 1v27h23" />
      </svg>
      <span className="mt-[6px]">{name}</span>
    </button>
  );
}

const Nav = ({ d, dim, label, className }) => (
  <button aria-label={label} className={className}>
    <svg viewBox="0 0 20 20" className="size-5" fill="none" stroke={dim ? '#a0a0a0' : '#606060'} strokeWidth="1.500">
      <path d={d} />
    </svg>
  </button>
);

function FileDialog() {
  return (
    <section className="absolute top-[570px] left-[57px] flex w-[949px] flex-col bg-white">
      <div className="flex h-[62px] items-start pt-px">
        <div className="flex h-[50px] w-[169px] shrink-0 items-center pl-[10px]">
          <Nav label="上一頁" dim d="M18 10H2M10 2l-8 8 8 8" />
          <Nav label="下一頁" dim d="M2 10h16M10 2l8 8-8 8" className="ml-[25px]" />
          <Nav label="最近" dim d="M4 7l6 6 6-6" className="ml-[20px]" />
          <Nav label="上移" d="M10 18V2M2 9l8-8 8 8" className="ml-[17px]" />
        </div>
        <div className="flex h-[50px] flex-1 items-center border border-r-0 border-[#d0d0d0] pl-[11px] text-[15px]">
          <svg viewBox="0 0 20 17" className="h-[17px] w-5"><path d="M0 1h7l2 2h10v13H0z" fill="#e8b52c" /><path d="M0 4h20v13H0z" fill="#ffd75e" /></svg>
          <svg viewBox="0 0 6 10" className="mr-[12px] ml-[10px] h-[9px] w-[5px]" fill="none" stroke="#333" strokeWidth="1.500"><path d="M1 1l4 4-4 4" /></svg>
          <a href="#desktop">桌面</a>
          <svg viewBox="0 0 6 10" className="mr-[12px] ml-[12px] h-[9px] w-[5px]" fill="none" stroke="#333" strokeWidth="1.500"><path d="M1 1l4 4-4 4" /></svg>
          <a href="#folder">新增資料夾 (2)</a>
        </div>
      </div>
      <div className="flex h-[44px] items-center border-b border-[#e4e6ea] bg-[#f4f6f9] pl-[15px] text-[15px] text-[#1f3a5f]">
        <button className="flex items-center gap-[6px]">
          組合管理
          <svg viewBox="0 0 10 8" className="h-[6px] w-[8px]"><path d="M0 0h10L5 8z" fill="#1f3a5f" /></svg>
        </button>
        <button className="ml-[39px]">新增資料夾</button>
      </div>
      <div className="flex h-[311px] overflow-hidden">
        <div className="w-[379px] shrink-0 border-r border-[#f2f2f2] pt-[6px] pr-[2px]">
          <PlaceRow active label="常用" icon={<><path d="M4 11l6-6 6 6v12h-4v-8H8v8H4z" fill="#b8b8b8" /><path d="M0 14L10 2l10 12" fill="none" stroke="#e8762c" strokeWidth="3" /></>} />
          <PlaceRow label="圖庫" icon={<><path d="M3 4h17v20H3z" fill="#7aa7dc" /><path d="M0 1h17v20H0z" fill="#147fd0" /><path d="M2 20l6-9 7 9z" fill="#fff" /><circle cx="12" cy="7" r="2" fill="#fff" /></>} />
          <div className="mr-[9px] ml-[6px] flex h-[33px] items-center"><hr className="w-full border-[#cfcfcf]" /></div>
          {places.map(([label, icon]) => <PlaceRow key={label} label={label} icon={icon} pinned />)}
        </div>
        <div className="flex pt-[22px] pl-[19px]">
          <FileItem name="刀片.ect" />
          <FileItem name="刀柄.ect" />
        </div>
      </div>
    </section>
  );
}

const cell = 'flex items-center border-t border-l border-[#999] px-[3px] whitespace-nowrap';

function StatusBar() {
  return (
    <footer className="flex h-[46px] shrink-0 flex-col border-t border-[#999] pt-[2px] text-[15px] leading-[18px]">
      <div className="flex h-[21px] gap-[3px]">
        <div className="flex-1 border-t border-l border-[#999]" />
        <div className={clsx(cell, 'w-[56px]')}>2D車床</div>
        <div className={clsx(cell, 'w-[50px]')}>副圖素</div>
        <div className={clsx(cell, 'w-[35px]')}>捕捉</div>
        <div className={clsx(cell, 'w-[35px] text-[#a0a0a0]')}>交點</div>
        <div className={clsx(cell, 'w-[35px] text-[#a0a0a0]')}>網格</div>
        <div className={clsx(cell, 'w-[20px]')}>HI</div>
        <div className="h-[18px] w-[13px] self-center bg-black" />
        <div className="flex w-[99px] items-center border-t border-l border-[#999] bg-white px-[2px]"><div className="h-[2px] w-full bg-black" /></div>
      </div>
      <div className="mt-px flex h-[21px] gap-[3px]">
        <div className="flex-1 pl-[3px] leading-[21px]">需要說明, 按F1</div>
        <div className={clsx(cell, 'w-[100px] px-[1px]')}>X -17.8054</div>
        <div className={clsx(cell, 'w-[100px] px-[1px]')}>Y -3.3782</div>
        <div className={clsx(cell, 'w-[99px] px-[1px]')}>Z 0.0000</div>
        <div className={clsx(cell, 'w-[36px]')}>公制</div>
      </div>
    </footer>
  );
}

const notes = [
  ['1.建立刀具', 'left-[660px] top-[247px]'],
  ['2.點擊成型刀', 'left-[1273px] top-[242px]'],
  ['3.點自訂幾何', 'left-[12px] top-[440px]'],
  ['4.開啟刀具幾何檔', 'left-[658px] top-[327px]'],
];

// red marks and numbered steps over the application window
function Notes() {
  return (
    <div className="pointer-events-none absolute inset-0">
      <svg className="absolute inset-0 h-full w-full" fill="none" stroke="#e81e25" strokeWidth="5">
        <rect x="268" y="112" width="48" height="42" />
        <rect x="1618" y="112" width="54" height="42" />
        <rect x="440" y="237" width="39" height="24" />
        <rect x="10" y="297" width="42" height="41" />
        <rect x="466" y="689" width="121" height="162" />
        <path d="M317 156l335 100M480 263l167 48M1612 157l-122 83" strokeLinecap="round" />
        <ellipse cx="1381" cy="196" rx="2" ry="3" fill="#e81e25" stroke="none" />
      </svg>
      {notes.map(([text, pos]) => (
        <p key={text} className={clsx('absolute text-[37px] leading-[50px] whitespace-nowrap text-[#e5484d]', pos)}>{text}</p>
      ))}
    </div>
  );
}

export default function App() {
  return (
    <div className="relative flex h-screen w-full flex-col overflow-hidden bg-[#efefef] font-['Noto_Sans','Noto_Sans_CJK_TC',sans-serif] text-black">
      <TitleBar />
      <MenuBar />
      <Toolbars />
      <main className="flex min-h-0 flex-1 border-t border-[#999]">
        <LeftDock />
        <VerticalBars />
        <Canvas />
        <PropertyPanel />
        <ViewBar />
      </main>
      <StatusBar />
      <FileDialog />
      <Notes />
    </div>
  );
}
